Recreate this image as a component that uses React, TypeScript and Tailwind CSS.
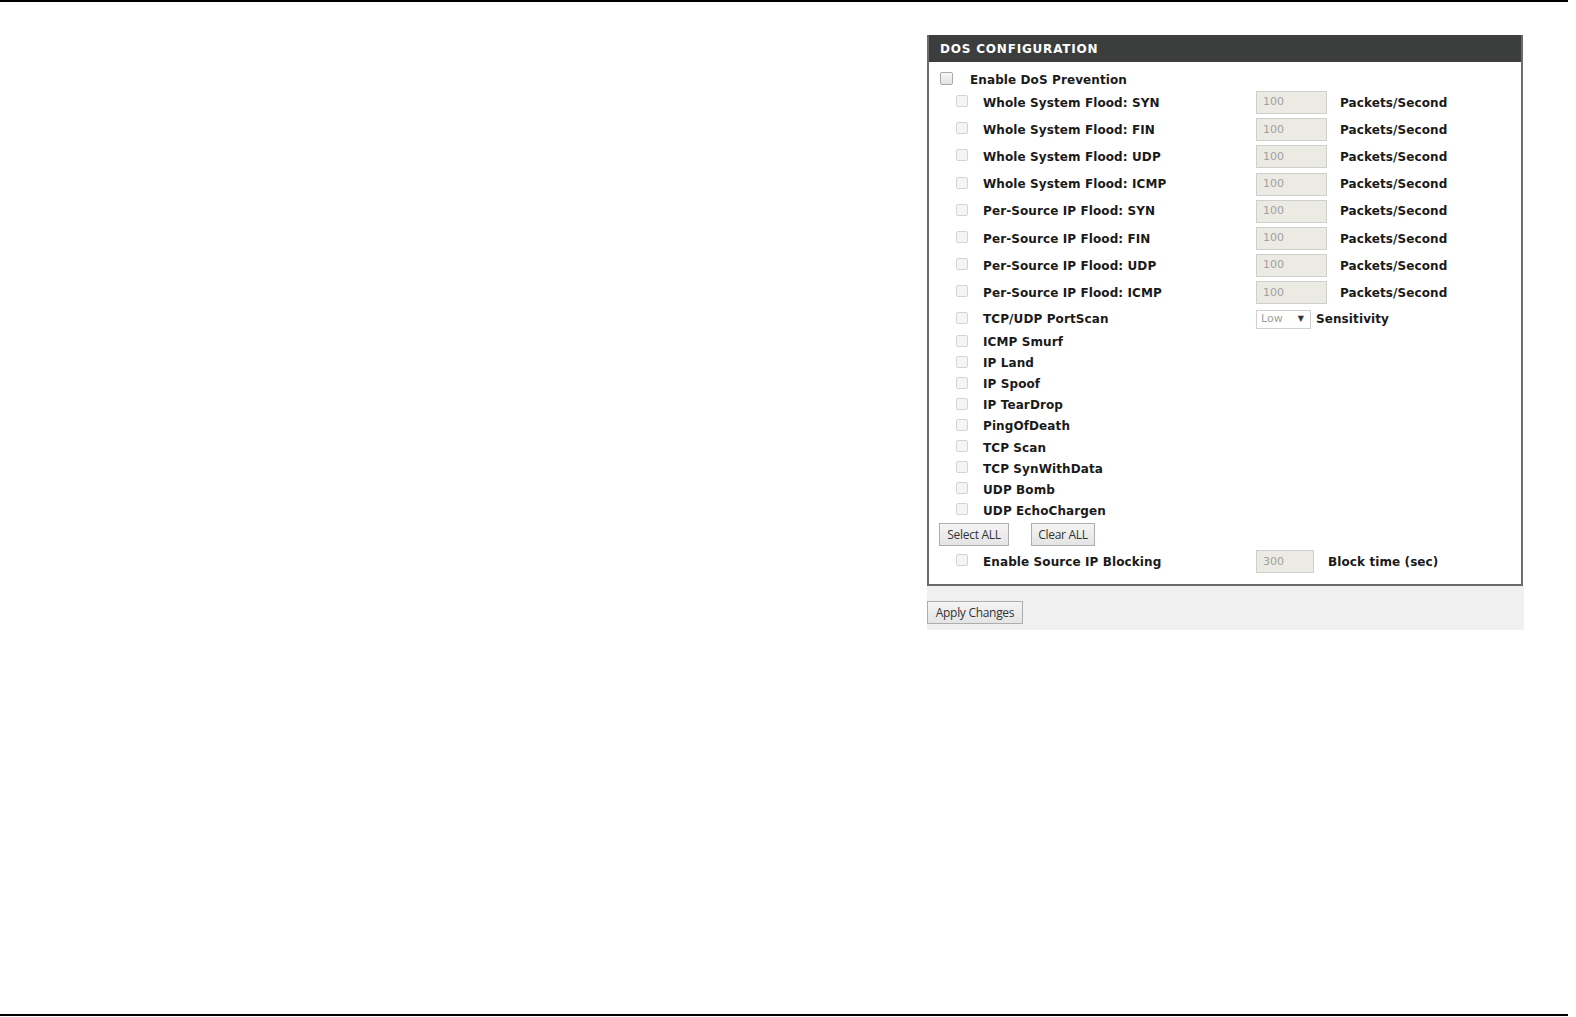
import React from "react";

const flood = [
  "Whole System Flood: SYN",
  "Whole System Flood: FIN",
  "Whole System Flood: UDP",
  "Whole System Flood: ICMP",
  "Per-Source IP Flood: SYN",
  "Per-Source IP Flood: FIN",
  "Per-Source IP Flood: UDP",
  "Per-Source IP Flood: ICMP",
];

const simple = [
  "ICMP Smurf",
  "IP Land",
  "IP Spoof",
  "IP TearDrop",
  "PingOfDeath",
  "TCP Scan",
  "TCP SynWithData",
  "UDP Bomb",
  "UDP EchoChargen",
];

const label = "font-['DejaVu_Sans',sans-serif] font-bold text-[12px] tracking-[0.1px] text-[#1a1a1a] whitespace-nowrap";

function Box({ main = false }: { main?: boolean }) {
  return (
    <div
      className={
        main
          ? "w-[13px] h-[13px] -mt-[3px] rounded-[2px] border border-[#a9a9a9] bg-gradient-to-b from-[#f8f8f8] to-[#e2e2e2]"
          : "w-[12px] h-[12px] -mt-[3px] rounded-[2px] border border-[#d4d4d4] bg-[#f5f5f5]"
      }
    />
  );
}

function Num({ v, w }: { v: string; w: string }) {
  return (
    <div
      className={`${w} h-[23px] border border-[#cfcfcf] bg-[#ebebe4] flex items-center pl-[6px] font-['DejaVu_Sans',sans-serif] text-[11px] text-[#a0a0a0]`}
    >
      {v}
    </div>
  );
}

function Btn({ children, w }: { children: React.ReactNode; w: string }) {
  return (
    <div
      className={`${w} h-[23px] border border-[#adadad] bg-gradient-to-b from-[#f4f4f4] to-[#e4e4e4] flex items-center justify-center font-['Open_Sans',sans-serif] text-[12px] text-[#333] tracking-[-0.3px]`}
    >
      {children}
    </div>
  );
}

export default function App() {
  return (
    <div className="w-[1576px] h-[1017px] bg-white relative overflow-hidden">
      <div className="w-[1568px] h-[2px] bg-black" />
      <div className="ml-[927px] mt-[33px] w-[597px]">
        <div className="w-[596px] border-l-2 border-r-2 border-b-2 border-[#6b6b6b] bg-white">
          <div className="h-[27px] bg-[#3c3e3e] flex items-center pl-[11px] font-['DejaVu_Sans',sans-serif] font-bold text-[12px] tracking-[0.8px] text-white">
            DOS CONFIGURATION
          </div>
          <div className="pt-[9px] pb-[9px]">
            <div className="h-[18px] flex items-center pl-[11px]">
              <Box main />
              <span className={`${label} ml-[17px]`}>Enable DoS Prevention</span>
            </div>
            {flood.map((t) => (
              <div key={t} className="h-[27.2px] flex items-center pl-[27px]">
                <div className="w-[300px] flex items-center">
                  <Box />
                  <span className={`${label} ml-[15px]`}>{t}</span>
                </div>
                <Num v="100" w="w-[71px]" />
                <span className={`${label} ml-[13px]`}>Packets/Second</span>
              </div>
            ))}
            <div className="h-[25px] flex items-center pl-[27px]">
              <div className="w-[300px] flex items-center">
                <Box />
                <span className={`${label} ml-[15px]`}>TCP/UDP PortScan</span>
              </div>
              <div className="w-[55px] h-[19px] border border-[#cfcfcf] bg-white flex items-center justify-between pl-[4px] pr-[6px] font-['DejaVu_Sans',sans-serif] text-[11px] text-[#a0a0a0]">
                <span>Low</span>
                <span className="text-[8px] text-[#333]">▼</span>
              </div>
              <span className={`${label} ml-[5px]`}>Sensitivity</span>
            </div>
            {simple.map((t) => (
              <div key={t} className="h-[21.1px] flex items-center pl-[27px]">
                <Box />
                <span className={`${label} ml-[15px]`}>{t}</span>
              </div>
            ))}
            <div className="h-[27px] flex items-center pl-[10px] gap-[22px]">
              <Btn w="w-[70px]">Select ALL</Btn>
              <Btn w="w-[64px]">Clear ALL</Btn>
            </div>
            <div className="h-[27px] flex items-center pl-[27px]">
              <div className="w-[300px] flex items-center">
                <Box />
                <span className={`${label} ml-[15px]`}>Enable Source IP Blocking</span>
              </div>
              <Num v="300" w="w-[58px]" />
              <span className={`${label} ml-[14px]`}>Block time (sec)</span>
            </div>
          </div>
        </div>
        <div className="w-[597px] h-[44px] bg-[#f0f0f0] pt-[15px]">
          <Btn w="w-[96px]">Apply Changes</Btn>
        </div>
      </div>
      <div className="absolute left-0 top-[1014px] w-[1568px] h-[2px] bg-black" />
    </div>
  );
}
